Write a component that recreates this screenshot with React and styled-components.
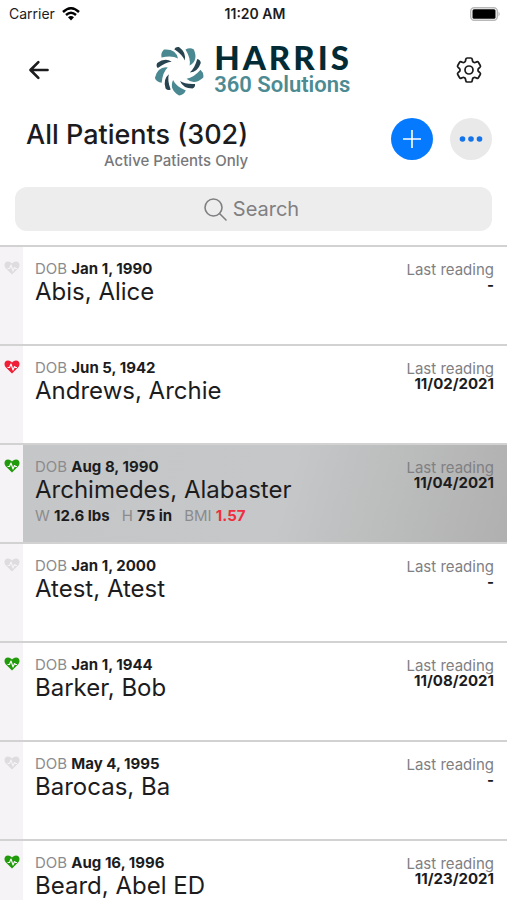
import React from 'react';
import styled, { createGlobalStyle, css } from 'styled-components';
import { IoArrowBack } from 'react-icons/io5';
import { HiOutlineCog6Tooth } from 'react-icons/hi2';

const Global = createGlobalStyle`
  * { box-sizing: border-box; }
  body { margin: 0; background: #fff; color: #1c1c1e; font-family: Inter, "Liberation Sans", sans-serif; overflow-x: hidden; }
  button, input { font: inherit; color: inherit; }
  h1, h2, p { margin: 0; font-weight: 400; }
`;

const Page = styled.div`
  display: flex;
  flex-direction: column;
  height: 100vh;
  overflow: hidden;
  & > * { flex: none; }
`;

const StatusBar = styled.div`
  display: grid;
  grid-template-columns: 1fr auto 1fr;
  align-items: center;
  height: 27px;
  padding: 0 6px 0 9px;
  font-size: 14px;
`;
const Carrier = styled.div`
  display: flex;
  align-items: center;
  gap: 7px;
`;
const Clock = styled.time`
  font-weight: 600;
`;
const Battery = styled.svg`
  justify-self: end;
`;

const NavBar = styled.header`
  display: grid;
  grid-template-columns: 1fr auto 1fr;
  align-items: center;
  height: 86px;
  padding: 0 22px 0 25px;
`;
const IconButton = styled.button`
  display: flex;
  padding: 0;
  border: 0;
  background: none;
  justify-self: ${(p) => (p.$end ? 'end' : 'start')};
`;
const Logo = styled.div`
  display: flex;
  align-items: center;
  gap: 10px;
  padding-right: 4px;
`;
const LogoText = styled.div`
  display: flex;
  flex-direction: column;
`;
const Brand = styled.span`
  font: 900 33px/30px Lato, sans-serif;
  letter-spacing: 3px;
  color: #022b35;
`;
const SubBrand = styled.span`
  font: 600 22px/26px Roboto, sans-serif;
  color: #4d8b93;
`;

const TitleBar = styled.section`
  display: flex;
  justify-content: space-between;
  align-items: flex-start;
  padding: 5px 15px 0 26px;
`;
const Heading = styled.div`
  display: flex;
  flex-direction: column;
  align-items: flex-end;
`;
const Title = styled.h1`
  font-size: 27px;
  line-height: 34px;
  font-weight: 500;
`;
const Subtitle = styled.p`
  font-size: 15px;
  line-height: 18px;
  font-weight: 500;
  color: #77777a;
`;
const Actions = styled.div`
  display: flex;
  gap: 17px;
`;
const RoundButton = styled.button`
  display: flex;
  align-items: center;
  justify-content: center;
  width: 42px;
  height: 42px;
  padding: 0;
  border: 0;
  border-radius: 50%;
  background: ${(p) => (p.$primary ? '#067aff' : '#e9e9ea')};
`;

const SearchBox = styled.label`
  display: flex;
  align-items: center;
  justify-content: center;
  gap: 6px;
  height: 44px;
  margin: 17px 15px 14px;
  padding-right: 4px;
  border-radius: 12px;
  background: #ededed;
  color: #808083;
`;
const SearchInput = styled.input`
  field-sizing: content;
  padding: 0;
  border: 0;
  outline: 0;
  background: none;
  font-size: 20px;
  line-height: 24px;
  &::placeholder { color: #808083; opacity: 1; }
`;

const List = styled.ul`
  margin: 0;
  padding: 0;
  list-style: none;
`;
const Row = styled.li`
  display: flex;
  height: 99px;
  border-top: 2px solid #d2d2d3;
`;
const Flag = styled.div`
  flex: none;
  width: 23px;
  padding: 12px 0 0 4px;
  background: #f5f3f5;
`;
const Body = styled.div`
  flex: 1;
  display: flex;
  justify-content: space-between;
  padding: 13px 13px 0 12px;
  ${(p) => p.$selected && css`
    background: linear-gradient(105deg, #c5c6c7 0%, #c5c7c8 54%, #bbbcbc 76%, #b0b0b0 100%);
  `}
`;
const Small = styled.p`
  font-size: 15px;
  line-height: 18px;
`;
const Name = styled.h2`
  font-size: 24px;
  line-height: 28px;
`;
const Label = styled.span`
  color: #8b8b8e;
`;
const Value = styled.strong`
  font-weight: 700;
  color: ${(p) => (p.$alert ? '#f02d3e' : '#1c1c1e')};
`;
const Metrics = styled.div`
  display: flex;
  gap: 12px;
  padding-top: 3px;
`;
const Reading = styled.div`
  padding-top: 2px;
  font-size: 15px;
  line-height: 15px;
  text-align: right;
`;
const ReadingLabel = styled.div`
  color: #808083;
`;

const HEART = { none: '#dedcde', red: '#ee1f36', green: '#219a0b' };

function Heart({ tone }) {
  return (
    <svg width="16" height="14" viewBox="0 0 32 28" role="img" aria-label={tone}>
      <path d="M16 27 3 14C-1 9 1 1 8 1c4 0 6 2 8 4 2-2 4-4 8-4 7 0 9 8 5 13z" fill={HEART[tone]} />
      <path d="M7 15h4l3-7 4 12 3-7 2 2h3" fill="none" stroke="#f5f3f5" strokeWidth="2.4" strokeLinejoin="round" />
    </svg>
  );
}

function Pinwheel() {
  return (
    <svg width="50" height="52" viewBox="-25 -26 50 52" aria-hidden="true">
      {[0, 1, 2, 3, 4, 5, 6, 7, 8, 9].map((i) => (
        <path
          key={i}
          transform={`rotate(${i * 36})`}
          d={i % 2
            ? 'M-13.5-18.5Q-4-18.5-1-11Q-6-14.5-16-14Q-16.5-17-13.5-18.5Z'
            : 'M-15-20.5Q-3-21.500-1-11.500Q-7-15-17.500-12.500Q-18.500-17.500-15-20.500Z'}
          fill={i % 2 ? '#274450' : '#4a8991'}
        />
      ))}
    </svg>
  );
}

const patients = [
  { dob: 'Jan 1, 1990', name: 'Abis, Alice', last: '-', tone: 'none' },
  { dob: 'Jun 5, 1942', name: 'Andrews, Archie', last: '11/02/2021', tone: 'red' },
  { dob: 'Aug 8, 1990', name: 'Archimedes, Alabaster', last: '11/04/2021', tone: 'green', selected: true,
    metrics: [['W', '12.6 lbs'], ['H', '75 in'], ['BMI', '1.57', true]] },
  { dob: 'Jan 1, 2000', name: 'Atest, Atest', last: '-', tone: 'none' },
  { dob: 'Jan 1, 1944', name: 'Barker, Bob', last: '11/08/2021', tone: 'green' },
  { dob: 'May 4, 1995', name: 'Barocas, Ba', last: '-', tone: 'none' },
  { dob: 'Aug 16, 1996', name: 'Beard, Abel ED', last: '11/23/2021', tone: 'green' },
];

export default function App() {
  return (
    <Page>
      <Global />
      <StatusBar>
        <Carrier>
          Carrier
          <svg width="18" height="14" viewBox="0 0 18 14" fill="none" stroke="#000" strokeWidth="2.4" aria-hidden="true">
            <path d="M1 5Q9-2.5 17 5M4 8Q9 3.5 14 8" />
            <path d="M6 10.2Q9 7.6 12 10.2L9 13.4z" fill="#000" stroke="none" />
          </svg>
        </Carrier>
        <Clock>11:20 AM</Clock>
        <Battery width="31" height="14" viewBox="0 0 31 14" aria-label="Battery full">
          <rect x=".7" y=".7" width="26.6" height="12.6" rx="3.5" fill="#fff" stroke="#b8b8b8" strokeWidth="1.4" />
          <rect x="2.5" y="2.2" width="23" height="9.6" rx="1.5" />
          <path d="M28.5 4.5q2.5 2.5 0 5z" fill="#b8b8b8" />
        </Battery>
      </StatusBar>
      <NavBar>
        <IconButton aria-label="Back"><IoArrowBack size={28} /></IconButton>
        <Logo>
          <Pinwheel />
          <LogoText>
            <Brand>HARRIS</Brand>
            <SubBrand>360 Solutions</SubBrand>
          </LogoText>
        </Logo>
        <IconButton $end aria-label="Settings"><HiOutlineCog6Tooth size={32} strokeWidth={1.3} /></IconButton>
      </NavBar>
      <TitleBar>
        <Heading>
          <Title>All Patients (302)</Title>
          <Subtitle>Active Patients Only</Subtitle>
        </Heading>
        <Actions>
          <RoundButton $primary aria-label="Add patient">
            <svg width="18" height="18" viewBox="0 0 18 18" stroke="#fff" strokeWidth="1.6"><path d="M9 0v18M0 9h18" /></svg>
          </RoundButton>
          <RoundButton aria-label="More">
            <svg width="24" height="6" viewBox="0 0 24 6" fill="#1273ea"><circle cx="3.5" cy="3" r="2.8" /><circle cx="12" cy="3" r="2.8" /><circle cx="20.5" cy="3" r="2.8" /></svg>
          </RoundButton>
        </Actions>
      </TitleBar>
      <SearchBox>
        <svg width="23" height="23" viewBox="0 0 23 23" fill="none" stroke="currentColor" strokeWidth="1.6" strokeLinecap="round" aria-hidden="true">
          <circle cx="9.5" cy="9.5" r="8.5" /><path d="m15.5 15.5 6.5 6.5" />
        </svg>
        <SearchInput type="search" placeholder="Search" aria-label="Search" />
      </SearchBox>
      <List>
        {patients.map((p) => (
          <Row key={p.name}>
            <Flag><Heart tone={p.tone} /></Flag>
            <Body $selected={p.selected}>
              <div>
                <Small><Label>DOB</Label> <Value>{p.dob}</Value></Small>
                <Name>{p.name}</Name>
                {p.metrics && (
                  <Metrics>
                    {p.metrics.map(([k, v, alert]) => (
                      <Small key={k}><Label>{k}</Label> <Value $alert={alert}>{v}</Value></Small>
                    ))}
                  </Metrics>
                )}
              </div>
              <Reading>
                <ReadingLabel>Last reading</ReadingLabel>
                <Value>{p.last}</Value>
              </Reading>
            </Body>
          </Row>
        ))}
      </List>
    </Page>
  );
}
